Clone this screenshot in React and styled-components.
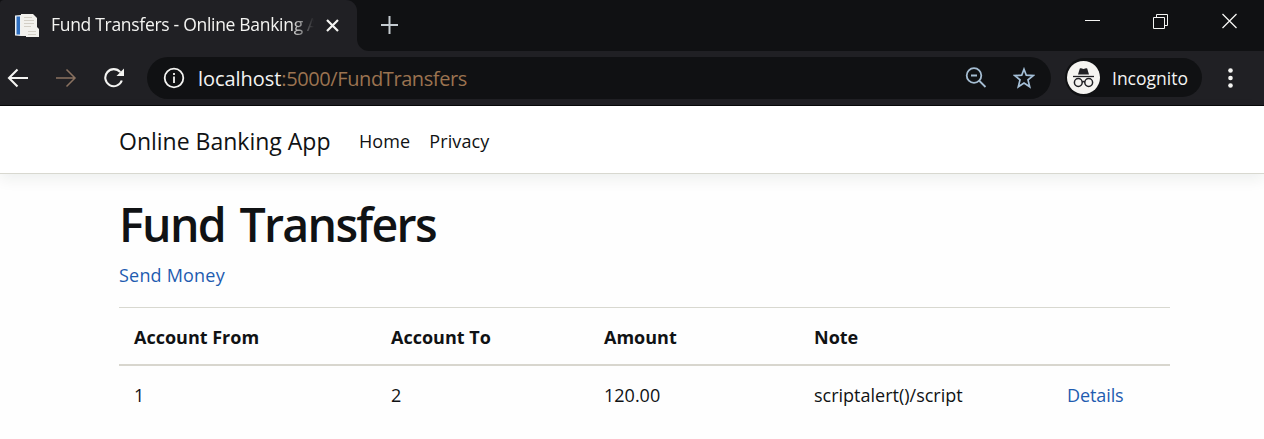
import React from 'react';
import styled, { createGlobalStyle } from 'styled-components';

const GlobalStyle = createGlobalStyle`
  * { box-sizing: border-box; }
  body {
    margin: 0;
    background: #fefefe;
    color: #101214;
    font-family: "Open Sans", "Noto Sans", sans-serif;
    font-size: 18px;
    overflow: hidden;
  }
  svg { display: block; flex: none; }
`;

const TabStrip = styled.div`
  display: flex;
  height: 51px;
  background: #202024;
`;

const TabSlot = styled.div`
  width: 357px;
  background: #101113;
`;

const Tab = styled.div`
  display: flex;
  align-items: center;
  height: 51px;
  padding: 0 0 1px 14px;
  background: #202024;
  border-radius: 4px 11px 0 0;
  color: #f4f4f2;
`;

const TabTitle = styled.div`
  width: 263px;
  margin: 0 12px 0 12px;
  padding-bottom: 2px;
  overflow: hidden;
  white-space: nowrap;
  font-size: 17.5px;
  line-height: 28px;
  letter-spacing: ${(p) => p.$track}px;
  mask-image: linear-gradient(90deg, #000 91%, transparent 100%);
`;

const StripRest = styled.div`
  flex: 1;
  display: flex;
  align-items: flex-start;
  justify-content: space-between;
  padding: 12px 26px 0 23px;
  background: #101113;
  border-bottom-left-radius: 12px;
`;

const WindowControls = styled.div`
  display: flex;
  gap: 52px;
  padding-top: 1px;
`;

const Toolbar = styled.div`
  display: flex;
  align-items: center;
  height: 55px;
  padding: 0 26px 0 7px;
  background: #202024;
  border-bottom: 1px solid #08090a;
`;

const NavButtons = styled.div`
  display: flex;
  gap: 26px;
  width: 140px;
  padding-bottom: 1px;
`;

const AddressBar = styled.div`
  display: flex;
  align-items: center;
  width: 904px;
  height: 42px;
  padding: 0 16px;
  border-radius: 21px;
  background: #101113;
`;

const Url = styled.div`
  flex: 1;
  margin-left: 13px;
  padding-top: 1px;
  font-size: 20px;
  line-height: 30px;
  letter-spacing: ${(p) => p.$track}px;
  color: #9b7350;
`;

const Host = styled.span`
  letter-spacing: ${(p) => p.$track}px;
  color: #f4f4f2;
`;

const AddressActions = styled.div`
  display: flex;
  gap: 26px;
`;

const IncognitoPill = styled.div`
  display: flex;
  align-items: center;
  gap: 12px;
  width: 137px;
  height: 39px;
  margin: 0 26px 1px 14px;
  padding-left: 2px;
  border-radius: 20px;
  background: #101113;
  color: #f4f4f2;
  font-size: 17.5px;
`;

const Navbar = styled.header`
  display: flex;
  align-items: center;
  height: 68px;
  padding: 3px 0 0 119px;
  background: #fff;
  border-bottom: 1px solid #d8d8d0;
  box-shadow: 0 5px 14px rgba(16, 40, 32, 0.07);
`;

const Brand = styled.a`
  width: 240px;
  font-size: 23px;
`;

const NavLink = styled.a`
  margin-right: 19px;
  font-size: 18px;
  letter-spacing: 0.1px;
`;

const Main = styled.main`
  width: 1051px;
  margin-left: 119px;
  padding-top: 21px;
`;

const Title = styled.h1`
  margin: 0;
  font-size: 46.5px;
  font-weight: 600;
  line-height: 58px;
  letter-spacing: ${(p) => p.$track}px;
  word-spacing: 4px;
`;

const Link = styled.a`
  color: #1e5cb0;
  letter-spacing: ${(p) => p.$track}px;
`;

const SendRow = styled.p`
  margin: 9px 0 18px;
  line-height: 27px;
`;

const Table = styled.table`
  width: 100%;
  table-layout: fixed;
  border-collapse: separate;
  border-spacing: 0;
`;

const HeadCell = styled.th`
  height: 59px;
  padding: 2px 0 0 15px;
  text-align: left;
  line-height: 28px;
  border-top: 1px solid #d8d8d0;
  border-bottom: 2px solid #d8d6ce;
`;

const Cell = styled.td`
  height: 58px;
  padding: 0 0 0 15px;
  line-height: 28px;
`;

const DocumentIcon = () => (
  <svg width="25" height="25" viewBox="0 0 25 25">
    <path d="M1 2.500 7 2V23L1 22.500Z" fill="#eef2f4" />
    <path d="M2.500 3.500h3.500v18H2.500z" fill="#2f6fc0" />
    <path d="M7 1h12l4 4v9l2 2v8H12v-1H7z" fill="#f2f1ed" />
    <path d="M10 4.500h8M10 7.500h10M10 10.500h10M10 13.500h7M14 18.500h8M14 21.500h8" stroke="#d3cfc6" strokeWidth="1" />
  </svg>
);

const Stroke = ({ w, h, color = '#f4f4f2', width = 1.6, children }) => (
  <svg width={w} height={h} viewBox={`0 0 ${w} ${h}`} fill="none" stroke={color} strokeWidth={width}>
    {children}
  </svg>
);

const IncognitoIcon = () => (
  <svg width="33" height="33" viewBox="0 0 33 33">
    <circle cx="16.5" cy="16.5" r="16.5" fill="#f5f4f1" />
    <path d="M11 13.500 12.800 7.600Q13.200 7 14 7.300L16.500 8 19 7.300Q19.800 7 20.200 7.600L22 13.500Z" fill="#202024" />
    <path d="M6 15.500H27" stroke="#202024" strokeWidth="1.3" />
    <g fill="none" stroke="#202024" strokeWidth="1.5">
      <circle cx="11.300" cy="21.500" r="3.900" />
      <circle cx="21.700" cy="21.500" r="3.900" />
      <path d="M15.200 21q1.300-.8 2.600 0" />
    </g>
  </svg>
);

const columns = [
  { label: 'Account From', width: 257 },
  { label: 'Account To', width: 213 },
  { label: 'Amount', width: 210 },
  { label: 'Note', width: 253 },
  { label: '', width: 118 },
];

export default function App() {
  return (
    <>
      <GlobalStyle />
      <TabStrip>
        <TabSlot>
          <Tab>
            <DocumentIcon />
            <TabTitle $track={-0.3}>Fund Transfers - Online Banking App</TabTitle>
            <Stroke w={13} h={13} width={2.2}><path d="M1 1 12 12M12 1 1 12" /></Stroke>
          </Tab>
        </TabSlot>
        <StripRest>
          <Stroke w={19} h={25} width={2} color="#c4cbd0"><path d="M9.500 4V22M1 13H18" /></Stroke>
          <WindowControls>
            <Stroke w={16} h={16} width={1}><path d="M0 7.500H15" /></Stroke>
            <Stroke w={17} h={16} width={1}><path d="M.5 4.500h11v11h-11zM3.500 4V1.500h11v11h-3" /></Stroke>
            <Stroke w={16} h={16} width={1.3}><path d="M.5 1 14.500 15M14.500 1 .5 15" /></Stroke>
          </WindowControls>
        </StripRest>
      </TabStrip>
      <Toolbar>
        <NavButtons>
          <Stroke w={22} h={20} width={2.1}><path d="M21 10H2.500M10.500 1.500 2 10l8.500 8.500" /></Stroke>
          <Stroke w={22} h={20} width={1.5} color="#8a7260"><path d="M1 10h18.500M11.500 1.500 20 10l-8.500 8.500" /></Stroke>
          <Stroke w={22} h={20} width={2.1}>
            <path d="M17.300 4.200A8.500 8.500 0 1 0 18.800 12.500" />
            <path d="M21 .5V8h-7.500z" fill="#f4f4f2" stroke="none" />
          </Stroke>
        </NavButtons>
        <AddressBar>
          <Stroke w={22} h={22} width={1.8}>
            <circle cx="11" cy="11" r="9.300" />
            <path d="M11 9.500V16M11 6v2" />
          </Stroke>
          <Url $track={-0.4}><Host $track={-0.05}>localhost</Host>:5000/FundTransfers</Url>
          <AddressActions>
            <Stroke w={22} h={22} width={1.8} color="#a5bdd2">
              <circle cx="9" cy="8.500" r="7.300" />
              <path d="M14 13.500 20.500 20M6 8.500h6" />
            </Stroke>
            <Stroke w={22} h={22} width={1.7} color="#a5c0d8">
              <path d="M11 2.200 13.300 8.200 20.200 8.600 15 12.900 16.700 19.800 11 16.100 5.300 19.800 7 12.900 1.800 8.600 8.700 8.200Z" />
            </Stroke>
          </AddressActions>
        </AddressBar>
        <IncognitoPill>
          <IncognitoIcon />
          Incognito
        </IncognitoPill>
        <svg width="5" height="20" viewBox="0 0 5 20" fill="#f4f4f2">
          <circle cx="2.500" cy="2.500" r="2.300" />
          <circle cx="2.500" cy="10" r="2.300" />
          <circle cx="2.500" cy="17.500" r="2.300" />
        </svg>
      </Toolbar>
      <Navbar>
        <Brand>Online Banking App</Brand>
        <NavLink>Home</NavLink>
        <NavLink>Privacy</NavLink>
      </Navbar>
      <Main>
        <Title $track={-1.7}>Fund Transfers</Title>
        <SendRow><Link $track={0.2}>Send Money</Link></SendRow>
        <Table>
          <colgroup>
            {columns.map((c) => <col key={c.width} width={c.width} />)}
          </colgroup>
          <thead>
            <tr>
              {columns.map((c) => <HeadCell key={c.width}>{c.label}</HeadCell>)}
            </tr>
          </thead>
          <tbody>
            <tr>
              <Cell>1</Cell>
              <Cell>2</Cell>
              <Cell>120.00</Cell>
              <Cell>scriptalert()/script</Cell>
              <Cell><Link $track={-0.1}>Details</Link></Cell>
            </tr>
          </tbody>
        </Table>
      </Main>
    </>
  );
}
